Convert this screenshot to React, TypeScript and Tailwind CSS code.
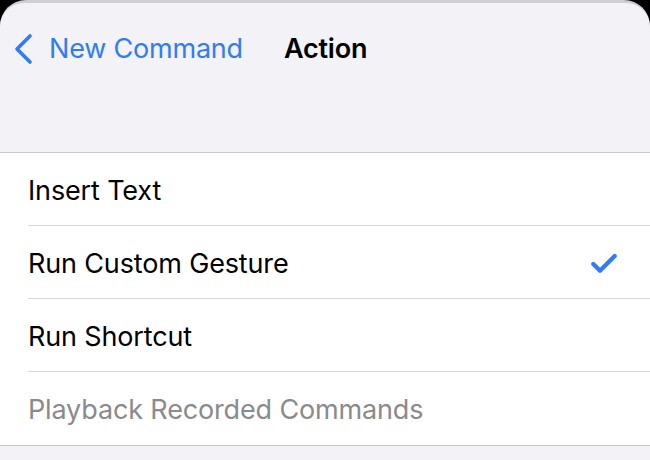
import { Check } from 'lucide-react'

const rows = [
  { label: 'Insert Text', checked: false, disabled: false },
  { label: 'Run Custom Gesture', checked: true, disabled: false },
  { label: 'Run Shortcut', checked: false, disabled: false },
  { label: 'Playback Recorded Commands', checked: false, disabled: true },
]

export default function App() {
  return (
    <div className="w-[650px] h-[460px] overflow-hidden bg-black" style={{ fontFamily: 'Inter, "Noto Sans", sans-serif' }}>
      <div className="h-full rounded-t-[26px] bg-[#cfcfd3] pt-[3px]">
        <div className="h-full rounded-t-[24px] bg-[#f2f2f7] flex flex-col">
          {/* nav bar */}
          <div className="h-[96px] flex items-center pl-[13px] pb-[4px]">
            <svg width="22" height="32" viewBox="0 0 22 32" className="text-[#2f7cf6]">
              <path d="M17 3 L4 16 L17 29" fill="none" stroke="currentColor" strokeWidth="3.6" strokeLinecap="round" strokeLinejoin="round" />
            </svg>
            <span className="ml-[14px] text-[27px] text-[#2f7cf6] tracking-[-0.2px]">New Command</span>
            <span className="ml-[41px] text-[27px] font-semibold text-black tracking-[-0.2px]">Action</span>
          </div>
          <div className="h-[53px]" />
          {/* list */}
          <div className="bg-white border-y border-[#c8c8cc]">
            {rows.map((r, i) => (
              <div key={r.label} className="pl-[28px]">
                <div className={`h-[73px] flex items-center pt-[4px] pr-[30px] ${i < rows.length - 1 ? 'border-b border-[#d8d8dc]' : ''}`}>
                  <span className={`flex-1 text-[27px] tracking-[-0.15px] ${r.disabled ? 'text-[#8a8a8e]' : 'text-black'}`}>{r.label}</span>
                  {r.checked && <Check size={32} strokeWidth={3.2} className="text-[#2f7cf6]" />}
                </div>
              </div>
            ))}
          </div>
        </div>
      </div>
    </div>
  )
}
